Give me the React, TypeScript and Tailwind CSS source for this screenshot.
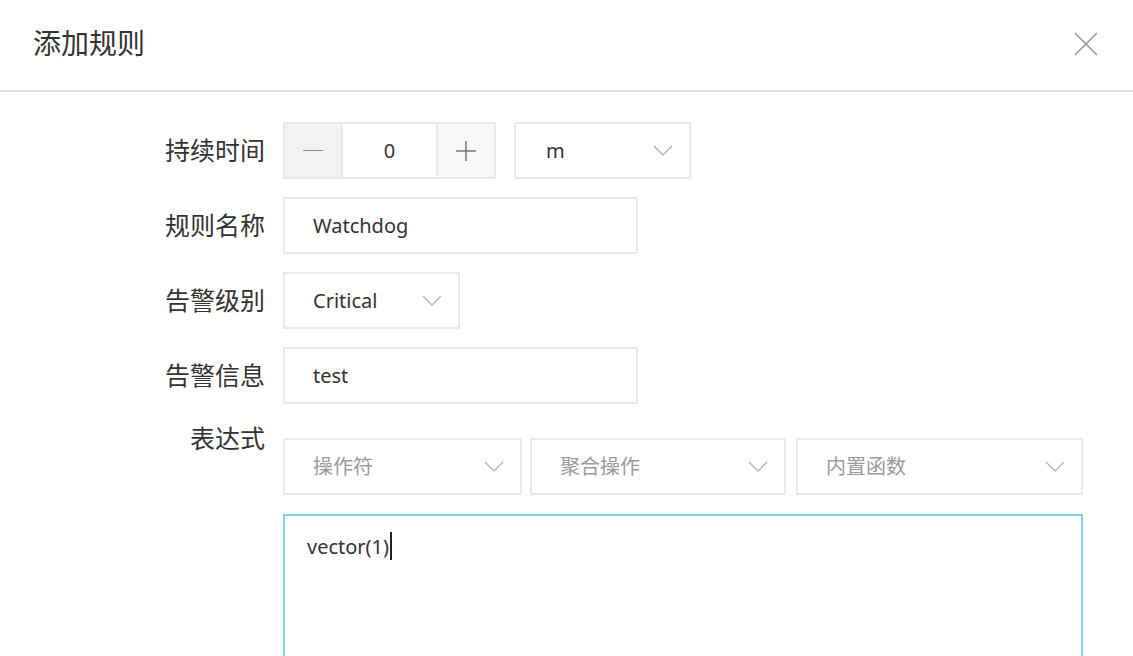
const font = { fontFamily: '"Noto Sans", "Noto Sans CJK SC", sans-serif' };

function Chevron() {
  return (
    <svg width="20" height="11" viewBox="0 0 20 11" fill="none" className="shrink-0">
      <path d="M1 1l9 9 9-9" stroke="#b4b4b4" strokeWidth="1.4" />
    </svg>
  );
}

function Select({ value, placeholder, className }: { value?: string; placeholder?: string; className: string }) {
  return (
    <div
      className={`h-[57px] flex items-center justify-between border-2 border-[#e9e9e9] bg-white pl-[28px] pr-[16px] text-[20px] ${className}`}
    >
      <span className={value ? 'text-[#333]' : 'text-[#9a9a9a]'}>{value ?? placeholder}</span>
      <Chevron />
    </div>
  );
}

function Row({ label, children }: { label: string; children: React.ReactNode }) {
  return (
    <div className="flex items-center">
      <div className="w-[265px] text-right text-[25px] text-[#333] leading-none">{label}</div>
      <div className="ml-[18px] flex items-center">{children}</div>
    </div>
  );
}

export default function App() {
  return (
    <div className="w-[1133px] h-[656px] overflow-hidden bg-white" style={font}>
      <div className="h-[92px] border-b-2 border-[#dedede] flex items-center justify-between pl-[33px] pr-[35px]">
        <h1 className="text-[28px] text-[#333] font-normal pb-[4px]">添加规则</h1>
        <svg width="24" height="24" viewBox="0 0 24 24" fill="none" className="mb-[3px]">
          <path d="M1 1l22 22M23 1L1 23" stroke="#9a9a9a" strokeWidth="1.6" />
        </svg>
      </div>

      <div className="pt-[30px] flex flex-col gap-[18px]">
        <Row label="持续时间">
          <div className="flex h-[57px] border-2 border-[#e9e9e9]">
            <div className="w-[56px] bg-[#f2f2f2] flex items-center justify-center">
              <span className="block w-[20px] h-[1.5px] bg-[#8c8c8c]" />
            </div>
            <div className="w-[97px] bg-white border-x-2 border-[#e9e9e9] flex items-center justify-center text-[20px] text-[#333]">
              0
            </div>
            <div className="w-[56px] bg-[#f8f8f8] flex items-center justify-center">
              <svg width="20" height="20" viewBox="0 0 20 20">
                <path d="M10 0v20M0 10h20" stroke="#777" strokeWidth="1.5" />
              </svg>
            </div>
          </div>
          <Select value="m" className="w-[177px] ml-[18px] pl-[30px]" />
        </Row>

        <Row label="规则名称">
          <div className="w-[355px] h-[57px] border-2 border-[#e9e9e9] flex items-center pl-[28px] text-[20px] text-[#333]">
            Watchdog
          </div>
        </Row>

        <Row label="告警级别">
          <Select value="Critical" className="w-[177px]" />
        </Row>

        <Row label="告警信息">
          <div className="w-[355px] h-[57px] border-2 border-[#e9e9e9] flex items-center pl-[28px] text-[20px] text-[#333]">
            test
          </div>
        </Row>

        <div className="flex items-start">
          <div className="w-[265px] text-right text-[25px] text-[#333] leading-[32px]">表达式</div>
          <div className="ml-[18px] mt-[16px] w-[800px]">
            <div className="flex gap-[8px]">
              <Select placeholder="操作符" className="w-[239px]" />
              <Select placeholder="聚合操作" className="w-[256px]" />
              <Select placeholder="内置函数" className="w-[287px] ml-[2px]" />
            </div>
            <div className="mt-[19px] h-[200px] border-2 border-[#7dd8e6] pl-[22px] pt-[16px] text-[20px] text-[#333] flex items-start">
              <span>vector(1)</span>
              <span className="inline-block w-[1.5px] h-[28px] bg-[#222] ml-[1px]" />
            </div>
          </div>
        </div>
      </div>
    </div>
  );
}
